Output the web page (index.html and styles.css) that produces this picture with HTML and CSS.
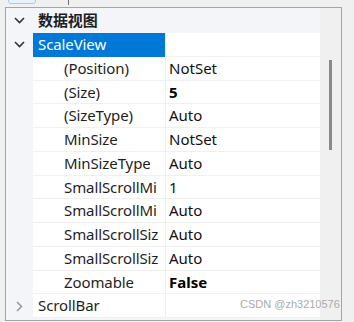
FILE: index.html
```html
<!DOCTYPE html>
<html>
<head>
<meta name="viewport" content="width=device-width, initial-scale=1">
<link rel="stylesheet" href="styles.css">
</head>
<body>

<div class="toolbar">
  <span class="tb-btn"></span>
  <span class="tb-sep"></span>
</div>

<div class="grid">
  <div class="rows">
    <div class="row cat">
      <span class="gut"><svg width="11" height="7" viewBox="0 0 11 7"><path d="M1 1 L5.5 5.5 L10 1" fill="none" stroke="#333" stroke-width="1.6"/></svg></span>
      <span class="name">数据视图</span>
    </div>
    <div class="row">
      <span class="gut"><svg width="11" height="7" viewBox="0 0 11 7"><path d="M1 1 L5.5 5.5 L10 1" fill="none" stroke="#333" stroke-width="1.6"/></svg></span>
      <span class="name top sel">ScaleView</span>
      <span class="val"></span>
    </div>
    <div class="row"><span class="gut"></span><span class="name">(Position)</span><span class="val">NotSet</span></div>
    <div class="row"><span class="gut"></span><span class="name">(Size)</span><span class="val"><b>5</b></span></div>
    <div class="row"><span class="gut"></span><span class="name">(SizeType)</span><span class="val">Auto</span></div>
    <div class="row"><span class="gut"></span><span class="name">MinSize</span><span class="val">NotSet</span></div>
    <div class="row"><span class="gut"></span><span class="name">MinSizeType</span><span class="val">Auto</span></div>
    <div class="row"><span class="gut"></span><span class="name">SmallScrollMi</span><span class="val">1</span></div>
    <div class="row"><span class="gut"></span><span class="name">SmallScrollMi</span><span class="val">Auto</span></div>
    <div class="row"><span class="gut"></span><span class="name">SmallScrollSiz</span><span class="val">Auto</span></div>
    <div class="row"><span class="gut"></span><span class="name">SmallScrollSiz</span><span class="val">Auto</span></div>
    <div class="row"><span class="gut"></span><span class="name">Zoomable</span><span class="val"><b>False</b></span></div>
    <div class="row">
      <span class="gut"><svg width="7" height="11" viewBox="0 0 7 11"><path d="M1 1 L5.5 5.5 L1 10" fill="none" stroke="#9a9a9a" stroke-width="1.6"/></svg></span>
      <span class="name top">ScrollBar</span>
      <span class="val"></span>
    </div>
  </div>
  <div class="scroll"><div class="thumb"></div></div>
</div>

<div class="mark">CSDN @zh3210576</div>

</body>
</html>
```

FILE: styles.css
```css
* {box-sizing: border-box;}

body {
  margin: 0;
  background: #f0f0f0;
  font-family: "Noto Sans", "Noto Sans CJK SC", sans-serif;
  font-size: 15px;
  color: #1e1e1e;
  height: 322px;
  overflow: hidden;
  position: relative;
}

/* bit of the toolbar above the grid */
.toolbar {
  height: 7px;
  overflow: hidden;
  display: flex;
  align-items: flex-start;
}

.tb-btn {
  margin: -9px 0 0 8px;
  width: 28px;
  height: 13px;
  border: 1px solid #9dcdf2;
  background: #e8f2fb;
  border-radius: 3px;
}

.tb-sep {
  margin-left: 32px;
  width: 1px;
  height: 5px;
  background: #6e6e6e;
}

/* property grid frame */
.grid {
  margin-left: 5px;
  width: 337px;
  height: 314px;
  border: 1px solid #a5a5a5;
  display: flex;
  overflow: hidden;
  background: #f0f0f0;
}

.rows {
  width: 314px;
  background: #f3f5f9;
}

.row {
  display: flex;
  height: 23.75px;
}

.row.cat {
  height: 25px;
}

.gut {
  width: 27px;
  flex: none;
  display: flex;
  align-items: center;
  justify-content: center;
}

.name {
  width: 132px;
  flex: none;
  padding-left: 31px;
  background: #fff;
  border-bottom: 1px solid #f0f0f0;
  white-space: nowrap;
  line-height: 22.75px;
  letter-spacing: -0.1px;
}

.name.top {
  padding-left: 5px;
}

.row.cat .name {
  background: none;
  border: none;
  padding-left: 5px;
  font-weight: bold;
  line-height: 25px;
}

.name.sel {
  background: #0078d7;
  color: #fff;
  border-bottom-color: #0078d7;
}

.val {
  flex: 1;
  background: #fff;
  border-left: 1px solid #f0f0f0;
  border-bottom: 1px solid #f0f0f0;
  padding-left: 3px;
  line-height: 22.75px;
  color: #111;
}

.val b {
  color: #000;
}

.scroll {
  flex: 1;
  background: #f0f0f0;
}

.thumb {
  margin: 52px 0 0 9px;
  width: 3px;
  height: 90px;
  background: #8a8a8a;
}

/* watermark over the frame */
.mark {
  position: absolute;
  left: 240px;
  top: 298px;
  font-family: "Liberation Sans", Arial, sans-serif;
  font-size: 11px;
  color: #aaa;
}
```
